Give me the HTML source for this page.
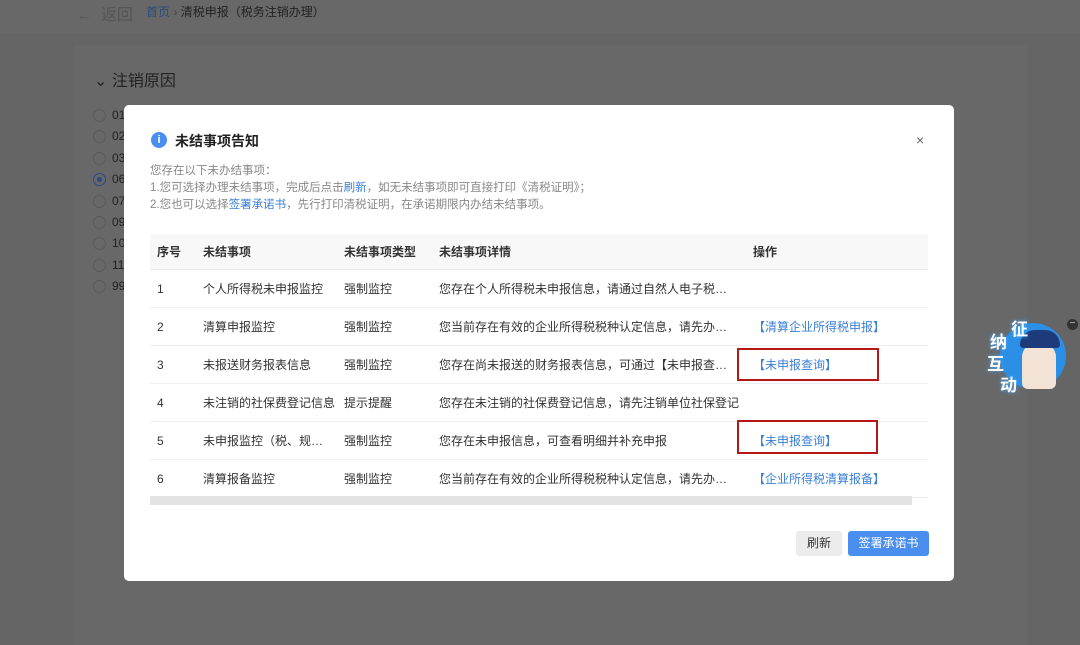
<!DOCTYPE html>
<html style="background:#656565"><head><meta charset="utf-8"><style>
*{margin:0;padding:0;box-sizing:border-box}
body{width:1080px;height:630px;overflow:hidden;background:#656565;font-family:"Liberation Sans","Noto Sans CJK SC",sans-serif;position:relative;color:#222}
.top{position:absolute;left:0;top:0;width:1080px;height:34px;background:#686868}
.panel{position:absolute;left:74px;top:45px;width:953px;height:600px;background:#686868}
.abs{position:absolute;white-space:nowrap}
.radio{position:absolute;left:93px;width:13px;height:13px;border:1px solid #5a5a5a;border-radius:50%}
.modal{position:absolute;left:124px;top:105px;width:830px;height:476px;background:#fff;border-radius:5px}
.row{position:absolute;left:26px;width:778px;border-bottom:1px solid #ebeef5;height:38px}
.row span{position:absolute;top:12px;font-size:12px;line-height:14px;color:#333;white-space:nowrap;overflow:hidden;text-overflow:ellipsis}
.d{max-width:300px}
.lk{color:#3a7fd6!important}
.red{position:absolute;border:2px solid #b51818}
</style></head><body>
<div class="top"></div>
<div class="abs" style="left:76px;top:1px;font-size:16px;color:#555">←&nbsp;&nbsp;返回</div>
<div class="abs" style="left:146px;top:3px;font-size:12px;color:#2a4a7a">首页 <span style="color:#444">›</span> <span style="color:#222">清税申报（税务注销办理）</span></div>
<div class="panel"></div>
<div class="abs" style="left:94px;top:67px;font-size:16px;color:#222">⌄ 注销原因</div>
<div class="radio" style="top:109px"></div><div class="abs" style="left:112px;top:108px;font-size:12px;color:#222">01</div>
<div class="radio" style="top:130px"></div><div class="abs" style="left:112px;top:129px;font-size:12px;color:#222">02</div>
<div class="radio" style="top:152px"></div><div class="abs" style="left:112px;top:151px;font-size:12px;color:#222">03</div>
<div class="radio" style="top:173px;border-color:#2a4a8a"><div style="width:5px;height:5px;background:#2a4a8a;border-radius:50%;margin:3px"></div></div><div class="abs" style="left:112px;top:172px;font-size:12px;color:#222">06</div>
<div class="radio" style="top:195px"></div><div class="abs" style="left:112px;top:194px;font-size:12px;color:#222">07</div>
<div class="radio" style="top:216px"></div><div class="abs" style="left:112px;top:215px;font-size:12px;color:#222">09</div>
<div class="radio" style="top:237px"></div><div class="abs" style="left:112px;top:236px;font-size:12px;color:#222">10</div>
<div class="radio" style="top:259px"></div><div class="abs" style="left:112px;top:258px;font-size:12px;color:#222">11</div>
<div class="radio" style="top:280px"></div><div class="abs" style="left:112px;top:279px;font-size:12px;color:#222">99</div>

<div class="modal">
<div class="abs" style="left:27px;top:27px;width:16px;height:16px;border-radius:50%;background:#4a8ef0;color:#fff;font-size:11px;text-align:center;line-height:16px;font-weight:bold">i</div>
<div class="abs" style="left:51px;top:26px;font-size:14px;font-weight:bold;color:#222">未结事项告知</div>
<div class="abs" style="left:792px;top:27px;font-size:14px;color:#666">×</div>
<div class="abs" style="left:26px;top:58px;font-size:11.5px;color:#888;line-height:17px">您存在以下未办结事项：<br>1.您可选择办理未结事项，完成后点击<span class="lk">刷新</span>，如无未结事项即可直接打印《清税证明》；<br>2.您也可以选择<span class="lk">签署承诺书</span>，先行打印清税证明，在承诺期限内办结未结事项。</div>
<div class="row" style="top:129px;height:36px;background:#f8f8f9;border-bottom:1px solid #e8eaec">
<span style="left:7px;font-weight:bold;top:11px">序号</span><span style="left:53px;font-weight:bold;top:11px">未结事项</span><span style="left:194px;font-weight:bold;top:11px">未结事项类型</span><span style="left:289px;font-weight:bold;top:11px">未结事项详情</span><span style="left:603px;font-weight:bold;top:11px">操作</span></div>
<div class="row" style="top:165px"><span style="left:7px">1</span><span style="left:53px">个人所得税未申报监控</span><span style="left:194px">强制监控</span><span class="d" style="left:289px">您存在个人所得税未申报信息，请通过自然人电子税务局系统办理</span></div>
<div class="row" style="top:203px"><span style="left:7px">2</span><span style="left:53px">清算申报监控</span><span style="left:194px">强制监控</span><span class="d" style="left:289px">您当前存在有效的企业所得税税种认定信息，请先办理企业所得税</span><span class="lk" style="left:603px">【清算企业所得税申报】</span></div>
<div class="row" style="top:241px"><span style="left:7px">3</span><span style="left:53px">未报送财务报表信息</span><span style="left:194px">强制监控</span><span class="d" style="left:289px">您存在尚未报送的财务报表信息，可通过【未申报查询】功能查询</span><span class="lk" style="left:603px">【未申报查询】</span></div>
<div class="row" style="top:279px"><span style="left:7px">4</span><span style="left:53px">未注销的社保费登记信息</span><span style="left:194px">提示提醒</span><span class="d" style="left:289px">您存在未注销的社保费登记信息，请先注销单位社保登记</span></div>
<div class="row" style="top:317px"><span style="left:7px">5</span><span style="left:53px;max-width:128px">未申报监控（税、规费等）</span><span style="left:194px">强制监控</span><span class="d" style="left:289px">您存在未申报信息，可查看明细并补充申报</span><span class="lk" style="left:603px">【未申报查询】</span></div>
<div class="row" style="top:355px"><span style="left:7px">6</span><span style="left:53px">清算报备监控</span><span style="left:194px">强制监控</span><span class="d" style="left:289px">您当前存在有效的企业所得税税种认定信息，请先办理企业所得税</span><span class="lk" style="left:603px">【企业所得税清算报备】</span></div>
<div class="abs" style="left:26px;top:391px;width:762px;height:9px;background:#e3e3e3"></div>
<div class="red" style="left:613px;top:243px;width:142px;height:33px"></div>
<div class="red" style="left:613px;top:315px;width:141px;height:34px"></div>
<div class="abs" style="left:672px;top:426px;width:46px;height:25px;background:#ececec;border-radius:3px;font-size:12px;color:#333;text-align:center;line-height:25px">刷新</div>
<div class="abs" style="left:724px;top:426px;width:81px;height:25px;background:#4a8ef0;border-radius:3px;font-size:12px;color:#fff;text-align:center;line-height:25px">签署承诺书</div>
</div>

<div class="abs" style="left:1000px;top:323px;width:66px;height:66px;border-radius:50%;background:#2b8fe6"></div>
<div class="abs" style="left:1022px;top:343px;width:34px;height:46px;border-radius:14px 14px 6px 6px;background:#f3e2d6"></div>
<div class="abs" style="left:1020px;top:330px;width:40px;height:18px;border-radius:18px 18px 4px 4px;background:#1d3a7a"></div>
<div class="abs" style="left:1011px;top:315px;font-size:17px;font-weight:bold;color:#fff;text-shadow:0 0 4px #4af">征</div>
<div class="abs" style="left:990px;top:328px;font-size:17px;font-weight:bold;color:#fff;text-shadow:0 0 4px #4af">纳</div>
<div class="abs" style="left:987px;top:350px;font-size:17px;font-weight:bold;color:#fff;text-shadow:0 0 4px #4af">互</div>
<div class="abs" style="left:1000px;top:371px;font-size:17px;font-weight:bold;color:#fff;text-shadow:0 0 4px #4af">动</div>
<div class="abs" style="left:1067px;top:319px;width:11px;height:11px;border-radius:50%;background:#333;color:#ccc;font-size:10px;text-align:center;line-height:10px">−</div>
</body></html>
